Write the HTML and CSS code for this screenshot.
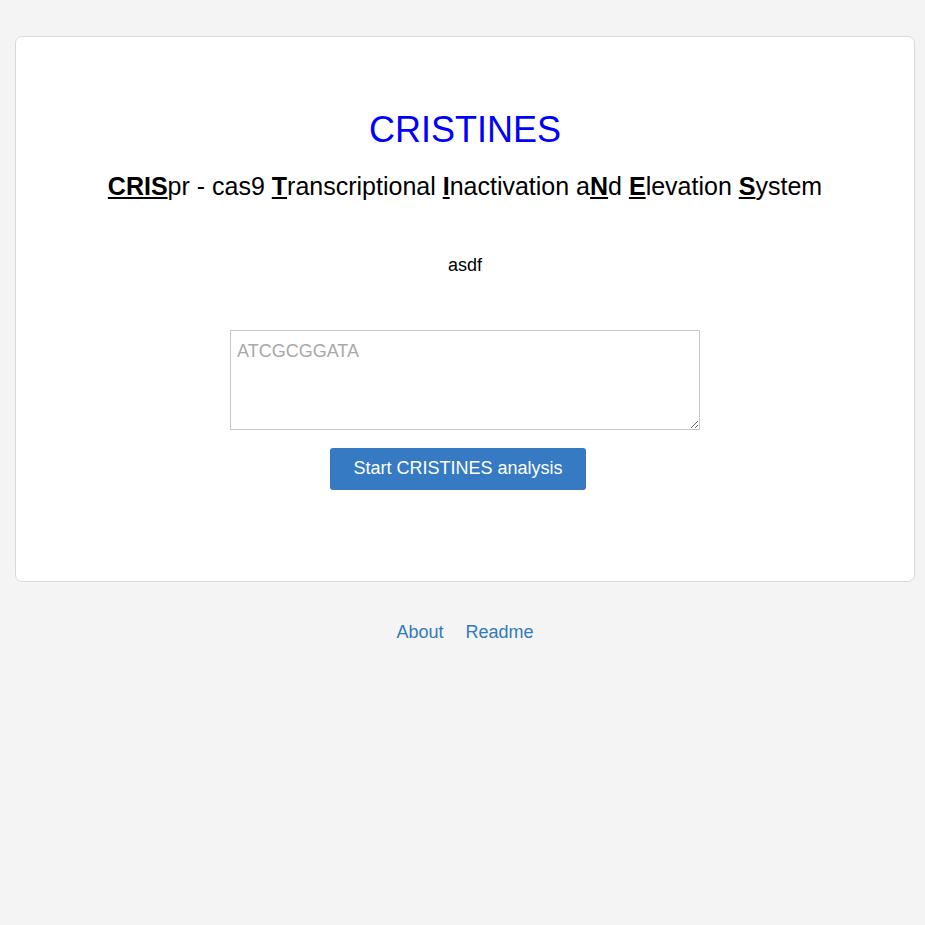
FILE: index.html
```html
<!DOCTYPE html>
<html>
<head>
<meta charset="utf-8">
<link rel="stylesheet" href="styles.css">
</head>
<body>
<div class="page">
  <div class="card">
    <h1 class="title">CRISTINES</h1>
    <h2 class="subtitle"><b>CRIS</b>pr - cas9 <b>T</b>ranscriptional <b>I</b>nactivation a<b>N</b>d <b>E</b>levation <b>S</b>ystem</h2>
    <p class="note">asdf</p>
    <form class="form">
      <textarea class="seq" placeholder="ATCGCGGATA"></textarea>
      <button type="button" class="btn">Start CRISTINES analysis</button>
    </form>
  </div>
  <nav class="links">
    <a href="#">About</a>
    <a href="#">Readme</a>
  </nav>
</div>
</body>
</html>
```
FILE: styles.css
```css
html, body {
  margin: 0;
  padding: 0;
  background: #f4f4f4;
  font-family: "Liberation Sans", Arial, sans-serif;
  color: #000;
}
.page {
  padding: 36px 10px 0 15px;
}
.card {
  background: #fff;
  border: 1px solid #d9d9d9;
  border-radius: 7px;
  padding: 73px 20px 91px;
  display: flex;
  flex-direction: column;
  align-items: center;
}
.title {
  margin: 0;
  font-size: 36px;
  line-height: 40px;
  font-weight: normal;
  color: #0000ff;
}
.subtitle {
  margin: 21px 0 0;
  font-size: 25px;
  line-height: 30px;
  font-weight: normal;
}
.subtitle b {
  font-weight: bold;
  text-decoration: underline;
}
.note {
  margin: 52px 0 0;
  font-size: 18px;
  line-height: 24px;
}
.form {
  margin-top: 53px;
  display: flex;
  flex-direction: column;
  align-items: center;
  gap: 18px;
}
.seq {
  box-sizing: border-box;
  width: 470px;
  height: 100px;
  border: 1px solid #c8c8c8;
  border-radius: 0;
  padding: 9px 6px 5px;
  font-family: "Liberation Sans", Arial, sans-serif;
  font-size: 18px;
  line-height: 22px;
  margin: 0;
}
.seq::placeholder {
  color: #a9a9a9;
}
.btn {
  box-sizing: border-box;
  height: 42px;
  width: 256px;
  margin-right: 14px;
  background: #357ac2;
  color: #fff;
  border: none;
  border-radius: 3px;
  font-family: "Liberation Sans", Arial, sans-serif;
  font-size: 18px;
  padding: 0 12px 2px;
  cursor: pointer;
}
.links {
  margin-top: 38px;
  display: flex;
  justify-content: center;
  gap: 22px;
  font-size: 18px;
  line-height: 24px;
}
.links a {
  color: #337ab7;
  text-decoration: none;
}
```
